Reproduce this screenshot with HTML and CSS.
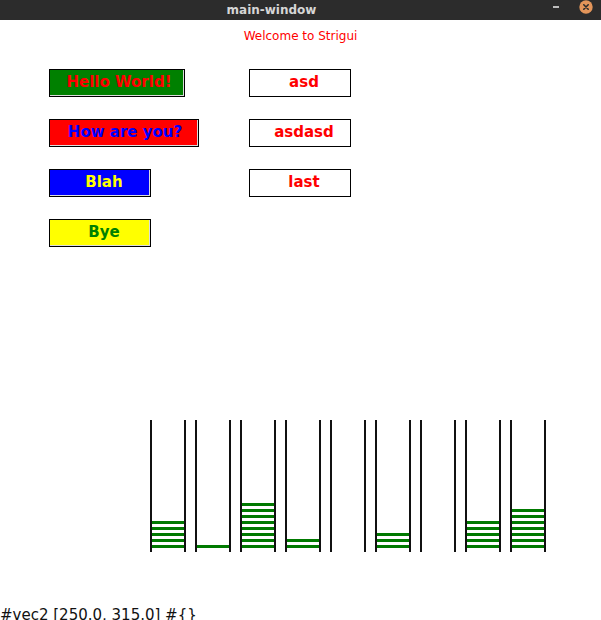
FILE: index.html
```html
<!DOCTYPE html>
<html>
<head>
<meta charset="utf-8">
<link rel="stylesheet" href="styles.css">
</head>
<body>
<div class="window">
  <header class="titlebar">
    <div class="title">main-window</div>
    <div class="controls">
      <span class="minimize"></span>
      <svg class="close" width="14" height="14" viewBox="0 0 14 14">
        <circle cx="7" cy="7" r="6.7" fill="#e3955a"/>
        <path d="M4.8 4.8 L9.2 9.2 M9.2 4.8 L4.8 9.2" stroke="#2b2b2b" stroke-width="1.6" stroke-linecap="round"/>
      </svg>
    </div>
  </header>
  <main class="content">
    <p class="welcome">Welcome to Strigui</p>
    <div class="buttons">
      <div class="btn green w136">Hello World!</div>
      <div class="btn red w150">How are you?</div>
      <div class="btn blue w102">Blah</div>
      <div class="btn yellow w102">Bye</div>
      <div class="btn plain w102">asd</div>
      <div class="btn plain w102">asdasd</div>
      <div class="btn plain w102">last</div>
    </div>
    <div class="tubes">
      <div class="tube"><i></i><i></i><i></i><i></i><i></i></div>
      <div class="tube"><i></i></div>
      <div class="tube"><i></i><i></i><i></i><i></i><i></i><i></i><i></i><i></i></div>
      <div class="tube"><i></i><i></i></div>
      <div class="tube"></div>
      <div class="tube"><i></i><i></i><i></i></div>
      <div class="tube"></div>
      <div class="tube"><i></i><i></i><i></i><i></i><i></i></div>
      <div class="tube"><i></i><i></i><i></i><i></i><i></i><i></i><i></i></div>
    </div>
    <p class="status">#vec2 [250.0, 315.0] #{}</p>
  </main>
</div>
</body>
</html>
```
FILE: styles.css
```css
html, body {
  margin: 0;
  padding: 0;
  background: #ffffff;
}
body {
  width: 601px;
  height: 620px;
  overflow: hidden;
  font-family: "DejaVu Sans", sans-serif;
}
.window {
  display: flex;
  flex-direction: column;
}
.titlebar {
  height: 20px;
  background: #2c2c2c;
  display: flex;
  align-items: flex-start;
}
.title {
  flex: 1;
  text-align: center;
  color: #d6d6d6;
  font-weight: bold;
  font-size: 12px;
  line-height: 20px;
}
.controls {
  display: flex;
  align-items: flex-start;
  width: 58px;
}
.minimize {
  display: block;
  width: 6px;
  height: 2px;
  margin-top: 6px;
  margin-left: 10px;
  background: #bdbdbd;
}
.close {
  display: block;
  margin-left: 20px;
  margin-top: 0;
}
.content {
  display: flex;
  flex-direction: column;
}
.welcome {
  margin: 9px 0 0 0;
  text-align: center;
  color: #ff0000;
  font-size: 12px;
  line-height: 14px;
}
.buttons {
  margin-top: 26px;
  margin-left: 49px;
  display: grid;
  grid-auto-flow: column;
  grid-template-rows: repeat(4, 28px);
  grid-template-columns: 200px 102px;
  row-gap: 22px;
  justify-items: start;
}
.btn {
  box-sizing: border-box;
  height: 28px;
  border: 1px solid #000;
  box-shadow: inset -1px -1px 0 #dcdcdc;
  font-weight: bold;
  font-size: 15px;
  line-height: 25px;
  text-align: center;
  padding-left: 8px;
  white-space: nowrap;
}
.w136 { width: 136px; padding-left: 4px; }
.w150 { width: 150px; padding-left: 2px; }
.w102 { width: 102px; }
.green { background: #008000; color: #ff0000; }
.red { background: #ff0000; color: #0000ff; }
.blue { background: #0000ff; color: #ffff00; }
.yellow { background: #ffff00; color: #008000; }
.plain { background: #ffffff; color: #ff0000; box-shadow: none; }
.tubes {
  margin-top: 173px;
  margin-left: 150px;
  display: flex;
  gap: 9px;
}
.tube {
  box-sizing: border-box;
  width: 36px;
  height: 132px;
  border-left: 2px solid #111;
  border-right: 2px solid #111;
  display: flex;
  flex-direction: column-reverse;
  gap: 3px;
  padding-bottom: 4px;
}
.tube i {
  display: block;
  height: 3px;
  background: #007a00;
}
.status {
  margin: 54px 0 0 0;
  font-size: 15px;
  line-height: 18px;
  color: #111;
  white-space: nowrap;
}
```
